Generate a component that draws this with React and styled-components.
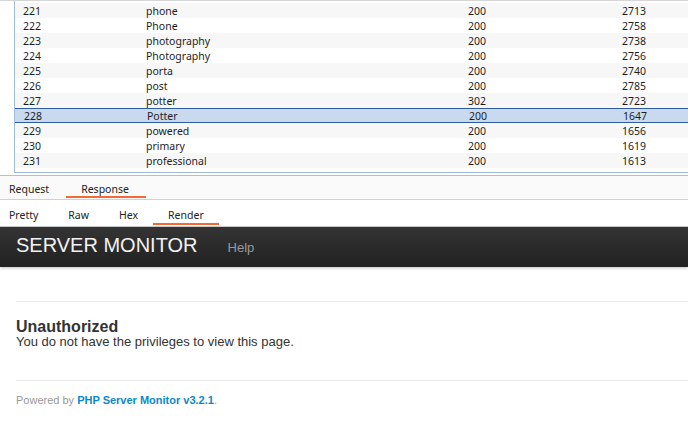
import styled, { createGlobalStyle } from 'styled-components';

const GlobalStyle = createGlobalStyle`
  html, body { margin: 0; padding: 0; background: #fff; }
  body { width: 688px; height: 422px; overflow: hidden; }
`;

const rows = [
  ['221', 'phone', '200', '2713'],
  ['222', 'Phone', '200', '2758'],
  ['223', 'photography', '200', '2738'],
  ['224', 'Photography', '200', '2756'],
  ['225', 'porta', '200', '2740'],
  ['226', 'post', '200', '2785'],
  ['227', 'potter', '302', '2723'],
  ['228', 'Potter', '200', '1647'],
  ['229', 'powered', '200', '1656'],
  ['230', 'primary', '200', '1619'],
  ['231', 'professional', '200', '1613'],
  ['232', 'products', '200', '1634'],
];

const Shell = styled.div`
  width: 688px;
  height: 422px;
  overflow: hidden;
  font-family: "Noto Sans", "Open Sans", sans-serif;
`;

const TopPane = styled.div`
  height: 176px;
  border-top: 1px solid #d6d6d6;
  border-bottom: 1px solid #c4bcbc;
  box-sizing: border-box;
  padding-left: 14px;
  background: #fff;
`;

const Table = styled.div`
  height: 172px;
  overflow: hidden;
  border-left: 1px solid #9fbbdc;
  border-bottom: 1px solid #9fbbdc;
  box-sizing: border-box;
  padding-top: 2px;
`;

const Row = styled.div`
  display: grid;
  grid-template-columns: 123px 322px 154px 1fr;
  height: 15px;
  box-sizing: border-box;
  align-items: center;
  padding-left: 8px;
  font-size: 10.5px;
  color: #1e1e1e;
  background: ${({ $odd }) => ($odd ? '#f7f7f7' : '#fff')};
  ${({ $selected }) =>
    $selected &&
    `
    background: #c9d9ef;
    border-top: 1px solid #2e5d98;
    border-bottom: 1px solid #2e5d98;
    margin-left: -1px;
    padding-left: 9px;
    border-left: 1px solid #2e5d98;
  `}
`;

const TabBar = styled.div`
  display: flex;
  height: ${({ $h }) => $h}px;
  box-sizing: border-box;
  background: ${({ $bg }) => $bg};
  border-bottom: 1px solid #cfd2d0;
`;

const TabList = styled.div`
  display: flex;
  margin-left: -6px;
  height: 100%;
`;

const Tab = styled.div`
  position: relative;
  padding: 3px ${({ $pr }) => $pr || 15}px 0 15px;
  display: flex;
  align-items: center;
  font-size: 10.5px;
  color: #222;
  &::after {
    content: '';
    display: ${({ $active }) => ($active ? 'block' : 'none')};
    position: absolute;
    left: 0;
    right: 0;
    bottom: 1px;
    height: 2px;
    background: #f26a36;
  }
`;

const Navbar = styled.div`
  height: 40px;
  background: linear-gradient(#343434, #212121);
  box-shadow: 0 1px 3px rgba(0, 0, 0, 0.25);
  display: flex;
  align-items: center;
  padding-left: 16px;
  font-family: "Liberation Sans", Arial, sans-serif;
`;

const Brand = styled.div`
  font-size: 20px;
  color: #f2f2f2;
  margin-right: 30px;
  margin-top: -3px;
`;

const NavLink = styled.div`
  font-size: 13px;
  color: #9a9a9a;
`;

const Content = styled.div`
  padding-left: 16px;
  font-family: "Liberation Sans", Arial, sans-serif;
  color: #333;
`;

const Rule = styled.div`
  border-top: 1px solid #eaeaea;
  margin-top: ${({ $mt }) => $mt}px;
`;

const Title = styled.div`
  margin-top: 16px;
  font-size: 16px;
  font-weight: bold;
  line-height: 17px;
`;

const Message = styled.div`
  font-size: 13px;
  line-height: 14px;
`;

const Footer = styled.div`
  margin-top: 12px;
  font-size: 11px;
  line-height: 14px;
  color: #999;
  a {
    color: #0a88cc;
    font-weight: bold;
    text-decoration: none;
  }
`;

export default function App() {
  return (
    <Shell>
      <GlobalStyle />
      <TopPane>
        <Table>
          {rows.map((r, i) => (
            <Row key={r[0]} $odd={i % 2 === 0} $selected={r[0] === '228'}>
              {r.map((c, j) => (
                <span key={j}>{c}</span>
              ))}
            </Row>
          ))}
        </Table>
      </TopPane>
      <TabBar $h={24} $bg="#fafafa">
        <TabList>
          <Tab $pr={17}>Request</Tab>
          <Tab $pr={17} $active>Response</Tab>
        </TabList>
      </TabBar>
      <TabBar $h={27} $bg="#fff">
        <TabList>
          <Tab>Pretty</Tab>
          <Tab>Raw</Tab>
          <Tab>Hex</Tab>
          <Tab $active>Render</Tab>
        </TabList>
      </TabBar>
      <Navbar>
        <Brand>SERVER MONITOR</Brand>
        <NavLink>Help</NavLink>
      </Navbar>
      <Content>
        <Rule $mt={34} />
        <Title>Unauthorized</Title>
        <Message>You do not have the privileges to view this page.</Message>
        <Rule $mt={31} />
        <Footer>
          Powered by <a href="#">PHP Server Monitor v3.2.1</a>.
        </Footer>
      </Content>
    </Shell>
  );
}
